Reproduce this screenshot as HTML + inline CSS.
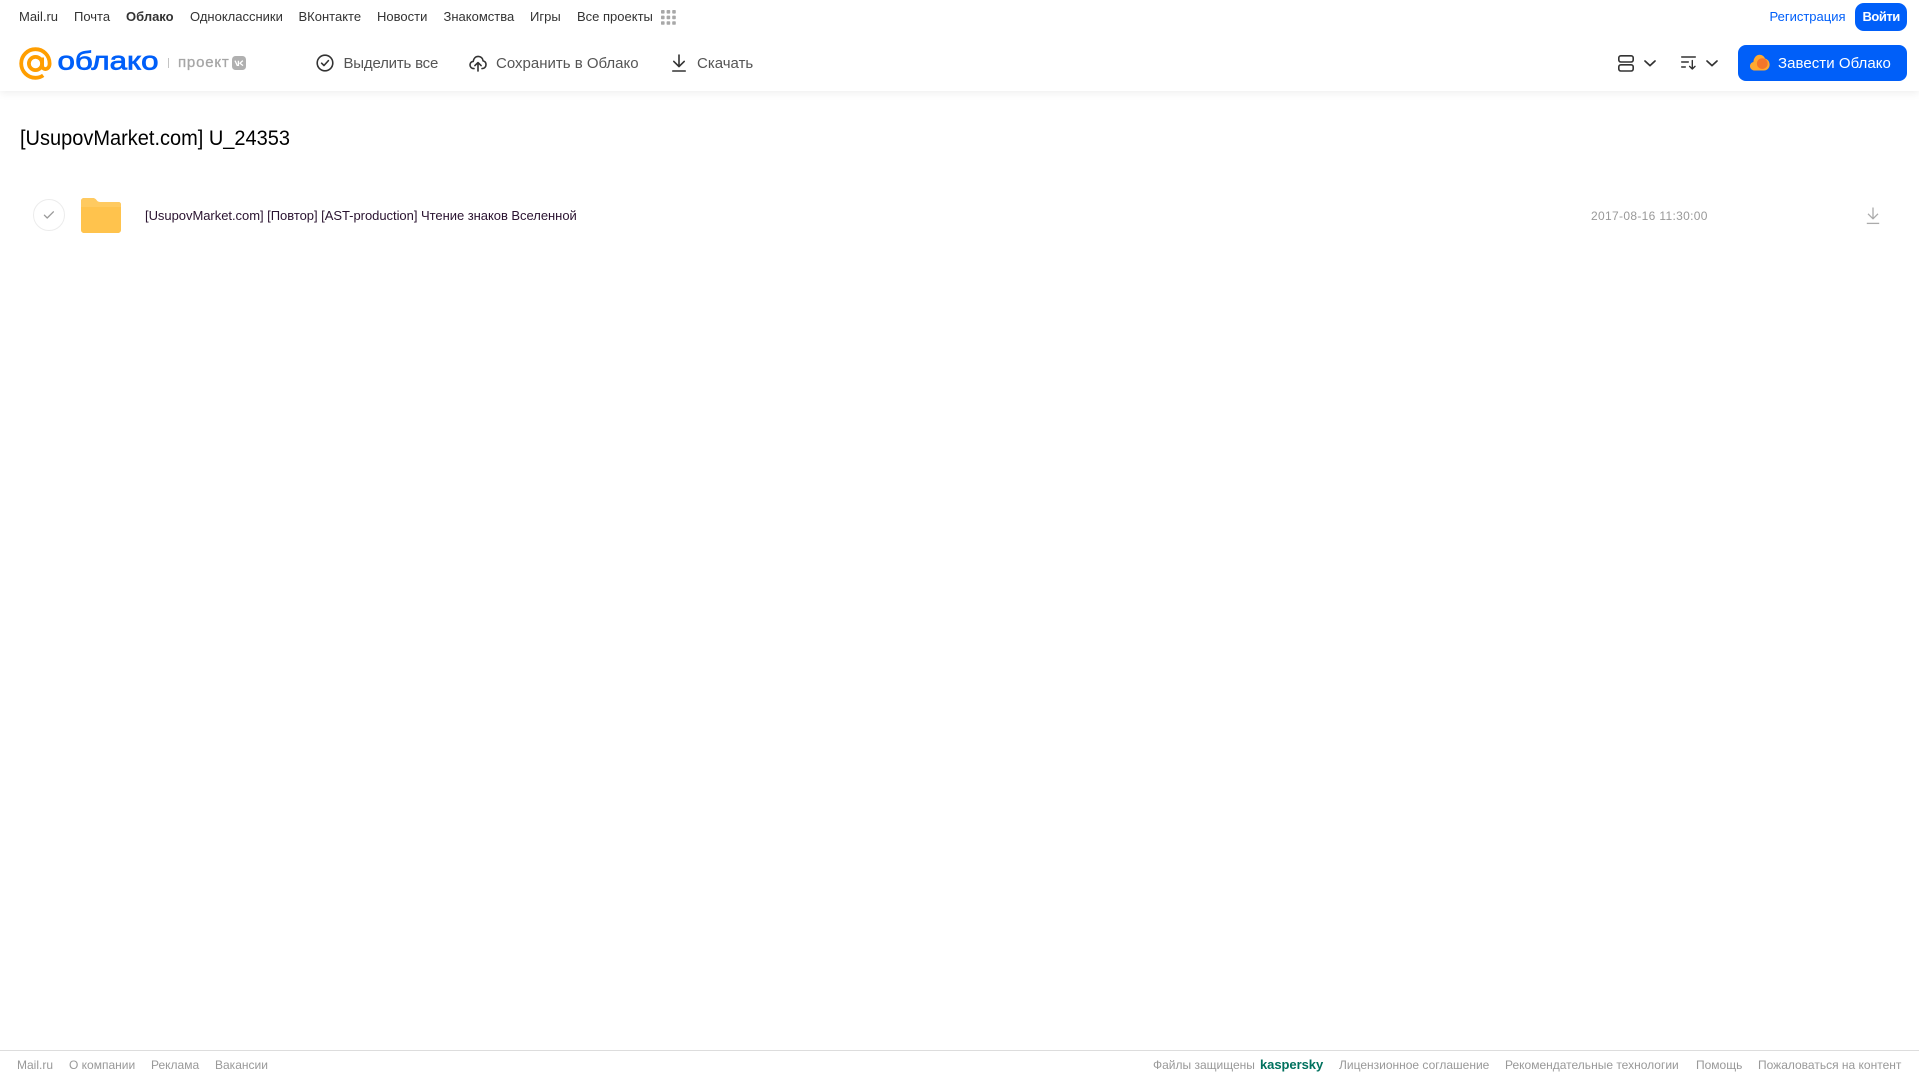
<!DOCTYPE html>
<html lang="ru"><head><meta charset="utf-8"><title>Облако</title>
<style>
html,body{margin:0;padding:0;background:#fff}
body{width:1919px;height:1079px;position:relative;overflow:hidden;font-family:"Liberation Sans","DejaVu Sans",sans-serif}
.t{position:absolute;white-space:nowrap;line-height:16px;color:#333}
.n{top:9px;font-size:13px}
.a{top:55px;font-size:15px;color:#555;line-height:18px}
.f{top:1057px;font-size:12px;color:#999}
svg{position:absolute;overflow:visible}
</style></head><body>
<div style="position:absolute;left:0;top:0;width:1919px;height:91px;background:#fff;box-shadow:0 2px 8px rgba(0,0,0,.07)"></div>

<span class="t n" style="left:19px">Mail.ru</span>
<span class="t n" style="left:74px">Почта</span>
<span class="t n" style="left:126px;font-weight:bold">Облако</span>
<span class="t n" style="left:190px">Одноклассники</span>
<span class="t n" style="left:298.5px">ВКонтакте</span>
<span class="t n" style="left:377px">Новости</span>
<span class="t n" style="left:443.5px">Знакомства</span>
<span class="t n" style="left:530px">Игры</span>
<span class="t n" style="left:577px">Все проекты</span>
<svg style="left:661px;top:10px" width="15" height="15" fill="#a8a8a8"><rect x="0" y="0" width="3.6" height="3.6" rx=".8"/><rect x="5.6" y="0" width="3.6" height="3.6" rx=".8"/><rect x="11.2" y="0" width="3.6" height="3.6" rx=".8"/><rect x="0" y="5.6" width="3.6" height="3.6" rx=".8"/><rect x="5.6" y="5.6" width="3.6" height="3.6" rx=".8"/><rect x="11.2" y="5.6" width="3.6" height="3.6" rx=".8"/><rect x="0" y="11.2" width="3.6" height="3.6" rx=".8"/><rect x="5.6" y="11.2" width="3.6" height="3.6" rx=".8"/><rect x="11.2" y="11.2" width="3.6" height="3.6" rx=".8"/></svg>

<span class="t n" style="left:1769.5px;color:#005ff9">Регистрация</span>
<div style="position:absolute;left:1855px;top:3px;width:52px;height:28px;border-radius:9px;background:#005ff9"></div>
<span class="t n" style="left:1862.5px;color:#fff;font-weight:bold;font-size:13px;letter-spacing:-.5px">Войти</span>

<!-- logo -->
<svg style="left:19px;top:47px" width="33" height="33" viewBox="0 0 33 33" fill="none" stroke="#ff9e00" stroke-width="3.8"><circle cx="16.5" cy="16.5" r="6.6"/><path d="M23.1 10.5V18.5C23.1 23.5 30.6 23.5 30.6 16.5C30.6 8.5 24.3 2.2 16.5 2.2C8.6 2.2 2.2 8.6 2.2 16.5C2.2 24.4 8.6 30.8 16.5 30.8C19.6 30.8 22 30 24.2 28.4"/></svg>
<svg style="left:0;top:0" width="300" height="90"><text x="57.5" y="69.5" font-family="Liberation Sans, sans-serif" font-size="26" fill="#005ff9" stroke="#005ff9" stroke-width=".75" textLength="101" lengthAdjust="spacingAndGlyphs">облако</text></svg>
<div style="position:absolute;left:168px;top:58px;width:1px;height:10px;background:#c4c4c4"></div>
<span class="t" style="left:178px;top:54px;font-size:15px;color:#a6a6a6;-webkit-text-stroke:.3px #a6a6a6;letter-spacing:.8px;line-height:18px">проект</span>
<svg style="left:232px;top:56px" width="14" height="14"><rect width="14" height="14" rx="3.5" fill="#b0b0b0"/><path d="M3 4.6L5.2 9.4H6.4V4.8M10.8 4.6L8 7.2 11 9.6" fill="none" stroke="#fff" stroke-width="1.3"/></svg>

<!-- actions -->
<svg style="left:316px;top:54px" width="18" height="18" fill="none" stroke="#333" stroke-width="1.6"><circle cx="9" cy="9" r="7.8"/><path d="M5.6 9.2L8 11.5 12.4 6.6" stroke-linecap="round" stroke-linejoin="round"/></svg>
<span class="t a" style="left:343.5px;letter-spacing:-.2px">Выделить все</span>
<svg style="left:469px;top:54px" width="18" height="18" fill="none" stroke="#333" stroke-width="1.6" stroke-linecap="round" stroke-linejoin="round"><path d="M5 14.6C2.6 14.6 1 13 1 10.9C1 8.9 2.4 7.6 4.2 7.4C4.6 4.4 6.6 2.4 9.2 2.4C11.8 2.4 13.7 4.2 14.1 6.9C15.9 7.3 17 8.8 17 10.6C17 12.8 15.4 14.6 13 14.6"/><path d="M9 17V9M5.9 11.6L9 8.6 12.1 11.6"/></svg>
<span class="t a" style="left:496px;letter-spacing:0">Сохранить в Облако</span>
<svg style="left:672px;top:54px" width="14" height="18" fill="none" stroke="#333" stroke-width="1.6" stroke-linecap="round" stroke-linejoin="round"><path d="M7 1V12.4M1.8 7.4L7 12.6 12.2 7.4"/><path d="M.8 17H13.2"/></svg>
<span class="t a" style="left:697px;letter-spacing:0">Скачать</span>

<svg style="left:1618px;top:55px" width="16" height="17" fill="none" stroke="#333" stroke-width="1.6"><rect x=".8" y=".8" width="14.4" height="6.2" rx="2"/><rect x=".8" y="9.8" width="14.4" height="6.2" rx="2"/></svg>
<svg style="left:1644px;top:60px" width="12" height="7" fill="none" stroke="#333" stroke-width="1.7" stroke-linecap="round" stroke-linejoin="round"><path d="M1 1L6 5.6 11 1"/></svg>
<svg style="left:1681px;top:56px" width="16" height="14" fill="none" stroke="#333" stroke-width="1.4" stroke-linecap="round" stroke-linejoin="round"><path d="M.7 1H14.3M.7 6H7.3M.7 11H4.3M11.3 4.6V13M8.6 10.4L11.3 13 14 10.4"/></svg>
<svg style="left:1706px;top:60px" width="12" height="7" fill="none" stroke="#333" stroke-width="1.7" stroke-linecap="round" stroke-linejoin="round"><path d="M1 1L6 5.6 11 1"/></svg>

<div style="position:absolute;left:1738px;top:45px;width:169px;height:36px;border-radius:8px;background:#005ff9"></div>
<svg style="left:1750px;top:54px" width="20" height="17"><path d="M5 16.5C2 16.5 0 14.5 0 12.2C0 10 1.5 8.4 3.4 8C3.7 3.8 6.4 .8 9.6 .8C12 .8 14 2.2 15 4.5C17.7 5.2 19.6 7.6 19.6 10.6C19.6 14 17 16.5 14 16.5Z" fill="#ffa930"/><circle cx="12.3" cy="9.6" r="5.4" fill="#f4762a"/></svg>
<span class="t a" style="left:1778px;color:#fff;letter-spacing:.05px">Завести Облако</span>

<!-- content -->
<span class="t" style="left:20px;top:126px;font-size:21px;line-height:26px;color:#000;transform:scaleX(.952);transform-origin:0 50%">[UsupovMarket.com] U_24353</span>

<div style="position:absolute;left:33px;top:199px;width:30px;height:30px;border:1px solid #ececec;border-radius:50%"></div>
<svg style="left:43px;top:210px" width="12" height="10" fill="none" stroke="#9a9a9a" stroke-width="1.3" stroke-linecap="round" stroke-linejoin="round"><path d="M1.4 5.2L4.2 8 10.4 1.8"/></svg>
<svg style="left:81px;top:198px" width="40" height="35"><path d="M0 3C0 1.3 1.3 0 3 0H11.5C13.5 0 14.5.8 15.6 2.2C16.5 3.3 17.2 4 19 4H37.5C38.9 4 40 5.1 40 6.5V32C40 33.7 38.7 35 37 35H3C1.3 35 0 33.7 0 32Z" fill="#ffc34d"/><path d="M0 3C0 1.3 1.3 0 3 0H11.5C13.5 0 14.5.8 15.6 2.2C16.5 3.3 17.2 4 19 4H37.5C38.9 4 40 5.1 40 6.5V9H0Z" fill="#ffca60"/></svg>
<span class="t" style="left:145px;top:208px;font-size:13px;color:#2a1330;letter-spacing:-.035px">[UsupovMarket.com] [Повтор] [AST-production] Чтение знаков Вселенной</span>
<span class="t" style="left:1591px;top:208px;font-size:12px;color:#999;letter-spacing:.33px">2017-08-16 11:30:00</span>
<svg style="left:1866px;top:207px" width="14" height="18" fill="none" stroke="#ababab" stroke-width="1.3" stroke-linejoin="round"><path d="M7 .5V11.5M2 6.8L7 11.8 12 6.8"/><path d="M.8 16.4H13.2"/></svg>

<!-- footer -->
<div style="position:absolute;left:0;top:1050px;width:1919px;height:1px;background:#ddd"></div>
<span class="t f" style="left:17px">Mail.ru</span>
<span class="t f" style="left:69px">О компании</span>
<span class="t f" style="left:151px">Реклама</span>
<span class="t f" style="left:215px">Вакансии</span>
<span class="t f" style="left:1153px">Файлы защищены</span>
<span class="t f" style="left:1260px;color:#00715e;font-weight:bold;font-size:13px;letter-spacing:-.05px">kaspersky</span>
<span class="t f" style="left:1339px">Лицензионное соглашение</span>
<span class="t f" style="left:1505px">Рекомендательные технологии</span>
<span class="t f" style="left:1696px">Помощь</span>
<span class="t f" style="left:1758px">Пожаловаться на контент</span>
</body></html>
